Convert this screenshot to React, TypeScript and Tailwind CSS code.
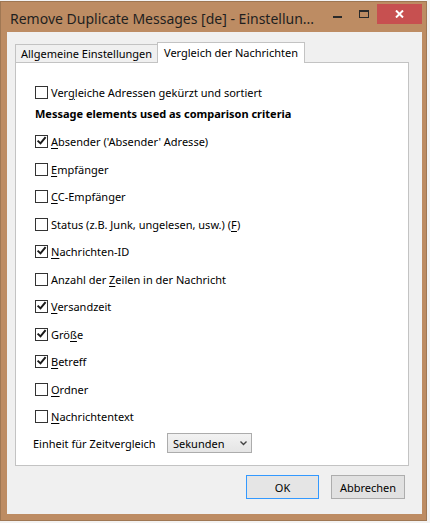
import React from "react";

const font = { fontFamily: '"Noto Sans", "Open Sans", sans-serif' };

type Row = { label: React.ReactNode; checked: boolean };

const U = ({ children }: { children: React.ReactNode }) => (
  <span className="underline underline-offset-[2px] decoration-[1px]">{children}</span>
);

function CheckBox({ checked }: { checked: boolean }) {
  return (
    <span className="flex h-[13px] w-[13px] shrink-0 items-center justify-center border border-[#333333] bg-white">
      {checked && (
        <svg width="11" height="11" viewBox="0 0 11 11">
          <path d="M1.6 4.6 L4.5 7.4 L9.6 1.2" fill="none" stroke="#1a1a1a" strokeWidth="2" />
        </svg>
      )}
    </span>
  );
}

function CheckRow({ label, checked, h = "h-[27.5px]" }: Row & { h?: string }) {
  return (
    <div className={`flex items-center gap-[3px] ${h}`}>
      <CheckBox checked={checked} />
      <span className="whitespace-nowrap text-[11px] leading-none text-black">{label}</span>
    </div>
  );
}

const rows: Row[] = [
  { label: <><U>A</U>bsender ('Absender' Adresse)</>, checked: true },
  { label: <><U>E</U>mpfänger</>, checked: false },
  { label: <><U>C</U>C-Empfänger</>, checked: false },
  { label: <>Status (z.B. Junk, ungelesen, usw.) (<U>F</U>)</>, checked: false },
  { label: <><U>N</U>achrichten-ID</>, checked: true },
  { label: <>Anzahl der <U>Z</U>eilen in der Nachricht</>, checked: false },
  { label: <><U>V</U>ersandzeit</>, checked: true },
  { label: <>Grö<U>ß</U>e</>, checked: true },
  { label: <><U>B</U>etreff</>, checked: true },
  { label: <><U>O</U>rdner</>, checked: false },
  { label: <><U>N</U>achrichtentext</>, checked: false },
];

export default function App() {
  return (
    <div className="h-[523px] w-[430px] overflow-hidden bg-[#f3f3f3] pt-[1px]" style={font}>
      {/* window frame */}
      <div className="flex h-[520px] w-[427px] flex-col border border-[#9f7753] bg-[#bd8c63]">
        {/* title bar */}
        <div className="flex h-[30px] items-start">
          <div className="ml-[9px] mt-[7px] whitespace-nowrap text-[14px] leading-[20px] text-[#1f1f1f]">
            Remove Duplicate Messages [de] - Einstellun...
          </div>
          <div className="ml-auto mt-[2px] flex">
            <div className="h-[20px] w-[26px]">
              <svg width="26" height="20" viewBox="0 0 26 20">
                <rect x="9" y="12" width="9" height="2" fill="#2a2a2a" />
              </svg>
            </div>
            <div className="h-[20px] w-[27px]">
              <svg width="27" height="20" viewBox="0 0 27 20">
                <rect x="9.5" y="6.5" width="9" height="7" fill="none" stroke="#2a2a2a" strokeWidth="1" />
                <rect x="9" y="6" width="10" height="2" fill="#2a2a2a" />
              </svg>
            </div>
            <div className="mr-[4px] flex h-[20px] w-[45px] items-center justify-center bg-[#c75050]">
              <svg width="9" height="8" viewBox="0 0 9 8">
                <path d="M1 0.5 L8 7.5 M8 0.5 L1 7.5" stroke="#ffffff" strokeWidth="2" />
              </svg>
            </div>
          </div>
        </div>

        {/* client area */}
        <div className="ml-[6px] mr-[4px] flex h-[482px] flex-col bg-[#f0f0f0] pl-[8px] pt-[10px]">
          {/* tabs */}
          <div className="relative z-10 -mb-[1px] flex h-[21px] items-end">
            <div className="mb-[1px] flex h-[18px] w-[142px] items-center whitespace-nowrap border-l border-t border-[#c3c3c3] bg-[#f0f0f0] pl-[5px] text-[11px] leading-none text-black">
              Allgemeine Einstellungen
            </div>
            <div className="flex h-[21px] w-[148px] items-center whitespace-nowrap border-l border-r border-t border-[#c3c3c3] bg-white pb-[2px] pl-[6px] text-[11px] leading-none text-black">
              Vergleich der Nachrichten
            </div>
          </div>

          {/* tab page */}
          <div className="flex h-[404px] w-[394px] flex-col border border-[#c3c3c3] bg-white pl-[19px] pt-[18px]">
            <CheckRow
              h="h-[22px]"
              checked={false}
              label={<>Ver<U>g</U>leiche Adressen gekürzt und sortiert</>}
            />
            <div className="flex h-[21px] items-center whitespace-nowrap text-[11px] font-bold leading-none text-black">
              Message elements used as comparison criteria
            </div>
            <div className="mt-[4px] flex flex-col">
              {rows.map((r, i) => (
                <CheckRow key={i} label={r.label} checked={r.checked} />
              ))}
            </div>
            <div className="-ml-[2px] mt-[2.5px] flex h-[20px] items-center">
              <span className="w-[134px] whitespace-nowrap text-[11px] leading-none text-black">Einheit für Zeitvergleich</span>
              <div className="flex h-[20px] w-[85px] items-center justify-between border border-[#acacac] bg-gradient-to-b from-[#f2f2f2] to-[#e5e5e5] pl-[5px] pr-[4px]">
                <span className="text-[11px] leading-none text-black">Sekunden</span>
                <svg width="7" height="5" viewBox="0 0 7 5">
                  <path d="M0.5 0.5 L3.5 3.5 L6.5 0.5" fill="none" stroke="#444444" strokeWidth="1.4" />
                </svg>
              </div>
            </div>
          </div>

          {/* dialog buttons */}
          <div className="mt-[9px] flex justify-end gap-[12px] pr-[17px]">
            <button className="flex h-[24px] w-[73px] items-center justify-center border border-[#3399ff] bg-[#e5e5e5] text-[11px] leading-none text-black">
              OK
            </button>
            <button className="flex h-[24px] w-[74px] items-center justify-center border border-[#adadad] bg-[#e1e1e1] text-[11px] leading-none text-black">
              Abbrechen
            </button>
          </div>
        </div>
      </div>
    </div>
  );
}
